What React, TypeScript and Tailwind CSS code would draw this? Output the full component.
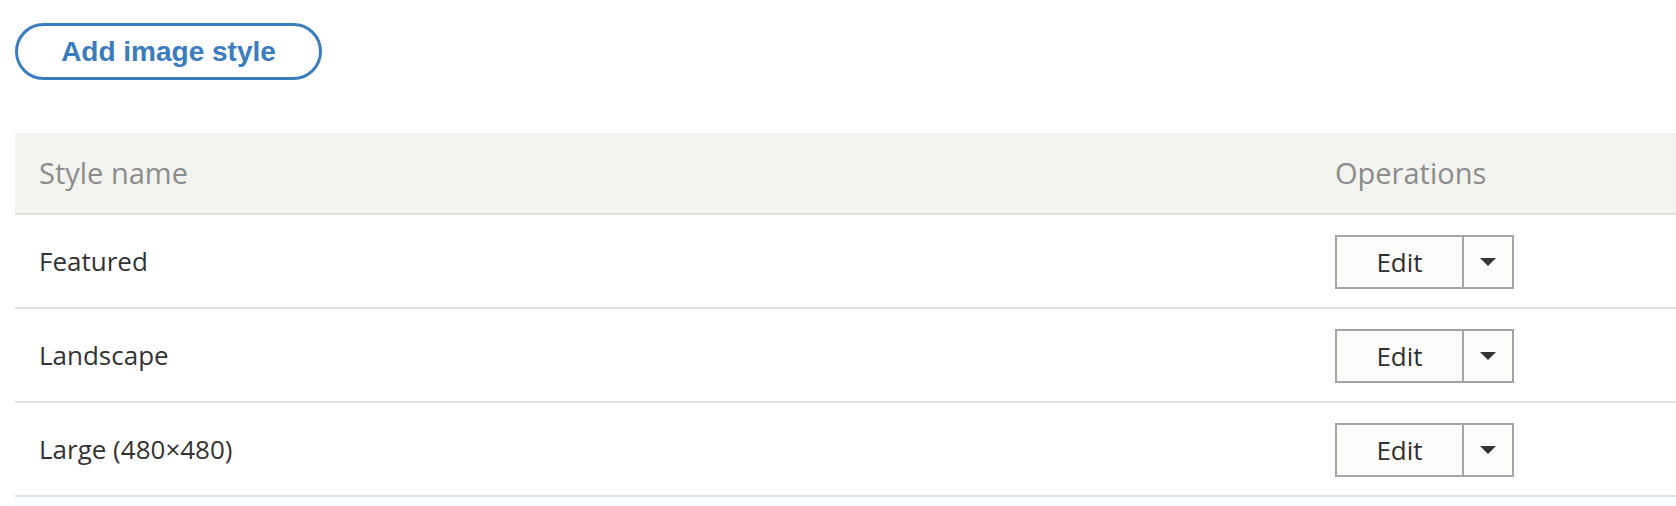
import React from 'react';

const styles = ['Featured', 'Landscape', 'Large (480×480)'];

// Split "Edit" button with a dropdown toggle
const OperationsButton = () => (
  <div className="inline-flex h-[54px] border-2 border-[#a5a5a5] bg-[#fbfbf9] text-[#2f2f2f]">
    <button className="w-[125px] flex items-center justify-center text-[26px] leading-none">Edit</button>
    <button className="w-[50px] flex items-center justify-center border-l-2 border-[#a5a5a5]">
      <svg width="16" height="8" viewBox="0 0 16 8">
        <path d="M0 0h16L8 8z" fill="#333" />
      </svg>
    </button>
  </div>
);

export default function App() {
  return (
    <div className="bg-white h-[506px] pl-[15px] pt-[23px] overflow-hidden" style={{ fontFamily: '"Open Sans", sans-serif' }}>
      <button
        className="w-[307px] h-[57px] rounded-full border-[3px] border-[#3a7cbe] text-[#3a7cbe] text-[28px] font-bold leading-none flex items-center justify-center"
        style={{ fontFamily: '"Liberation Sans", Arial, sans-serif' }}
      >
        Add image style
      </button>

      <table className="mt-[53px] w-[1661px] border-collapse table-fixed">
        <colgroup>
          <col className="w-[1296px]" />
          <col />
        </colgroup>
        <thead>
          <tr className="bg-[#f3f3ef] border-b-2 border-[#e2e2dc]">
            <th className="h-[81px] pl-[24px] text-left font-normal text-[29px] text-[#8c8c8c]">Style name</th>
            <th className="h-[81px] pl-[24px] text-left font-normal text-[29px] text-[#8c8c8c]">Operations</th>
          </tr>
        </thead>
        <tbody>
          {styles.map((name) => (
            <tr key={name} className="border-b-2 border-[#e2e2dc]">
              <td className="h-[94px] pl-[24px] text-[26px] text-[#333]">{name}</td>
              <td className="h-[94px] pl-[24px] pt-[2px] align-middle">
                <OperationsButton />
              </td>
            </tr>
          ))}
          <tr className="bg-[#f7fcff]">
            <td className="h-[40px]" />
            <td className="h-[40px]" />
          </tr>
        </tbody>
      </table>
    </div>
  );
}
